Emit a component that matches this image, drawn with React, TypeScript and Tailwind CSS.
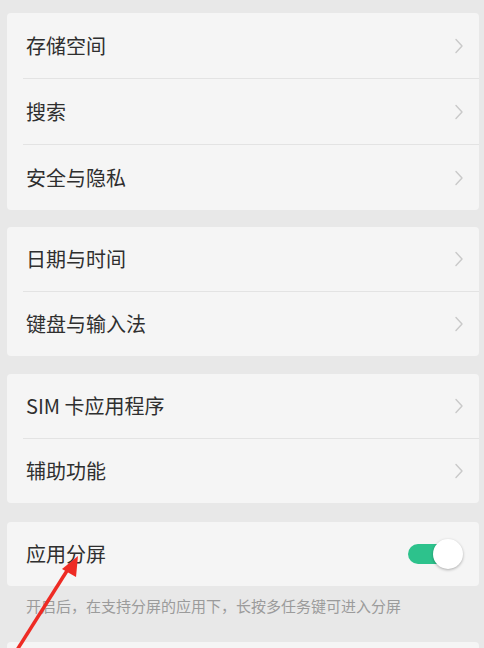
import React from "react";

const Chevron = () => (
  <svg width="10" height="16" viewBox="0 0 10 16" fill="none">
    <path d="M2 1.5 L8 8 L2 14.5" stroke="#c9c9c9" strokeWidth="1.4" strokeLinecap="round" strokeLinejoin="round" />
  </svg>
);

const Row = ({ label, h = "h-[64px]" }: { label: string; h?: string }) => (
  <div className={`flex items-center justify-between pl-[19px] pr-[15px] ${h}`}>
    <span className="text-[20px] text-[#2f2f2f] leading-none">{label}</span>
    <Chevron />
  </div>
);

const Divider = () => <div className="h-px ml-[16px] bg-[#e3e3e3]" />;

export default function App() {
  return (
    <div
      className="relative w-[484px] h-[648px] overflow-hidden bg-[#e8e8e8] pl-[7px] pr-[5px] pt-[13px]"
      style={{ fontFamily: '"Noto Sans CJK SC", "Noto Sans", sans-serif' }}
    >
      <div className="flex flex-col rounded-[4px] bg-[#f5f5f5]">
        <Row label="存储空间" h="h-[65px]" />
        <Divider />
        <Row label="搜索" h="h-[65px]" />
        <Divider />
        <Row label="安全与隐私" h="h-[65px]" />
      </div>
      <div className="mt-[17px] flex flex-col rounded-[4px] bg-[#f5f5f5]">
        <Row label="日期与时间" />
        <Divider />
        <Row label="键盘与输入法" />
      </div>
      <div className="mt-[18px] flex flex-col rounded-[4px] bg-[#f5f5f5]">
        <Row label="SIM 卡应用程序" />
        <Divider />
        <Row label="辅助功能" />
      </div>
      <div className="mt-[19px] flex items-center justify-between rounded-[4px] bg-[#f5f5f5] h-[64px] pl-[19px] pr-[16px]">
        <span className="text-[20px] text-[#2f2f2f] leading-none">应用分屏</span>
        <div className="relative w-[55px] h-[30px] flex items-center">
          <div className="w-[40px] h-[20px] rounded-full bg-[#2dc28c]" />
          <div className="absolute right-0 top-0 w-[30px] h-[30px] rounded-full bg-white shadow-[0_1px_3px_rgba(0,0,0,0.3)]" />
        </div>
      </div>
      <div className="h-[56px] pl-[19px] pt-[7px]">
        <span className="text-[15px] text-[#9b9b9b] leading-none">开启后，在支持分屏的应用下，长按多任务键可进入分屏</span>
      </div>
      <div className="h-[60px] rounded-[4px] bg-[#f5f5f5]" />
      <svg className="absolute left-0 top-0" width="484" height="648" viewBox="0 0 484 648">
        <line x1="17" y1="650" x2="70" y2="566" stroke="#ee2b24" strokeWidth="3.5" />
        <polygon points="78,556 62,569 76,577" fill="#ee2b24" />
      </svg>
    </div>
  );
}
